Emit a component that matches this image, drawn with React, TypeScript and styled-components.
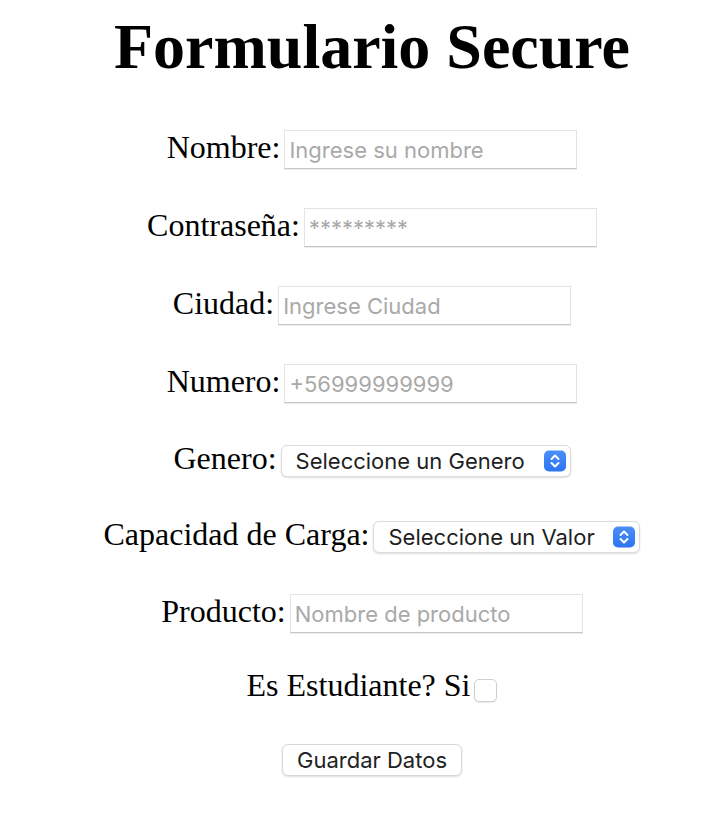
import React from "react";
import styled, { createGlobalStyle } from "styled-components";

const GlobalStyle = createGlobalStyle`
  html, body {
    margin: 0;
    padding: 0;
    background: #ffffff;
  }
  body {
    font-family: "Liberation Serif", "Times New Roman", serif;
    color: #000;
  }
`;

const Page = styled.main`
  display: flex;
  flex-direction: column;
  align-items: center;
  padding: 10px 0 40px 22px;
`;

const Title = styled.h1`
  margin: 0;
  font-family: "Liberation Serif", "Times New Roman", serif;
  font-weight: 700;
  font-size: 64px;
  line-height: normal;
  color: #000;
`;

const Form = styled.form`
  display: flex;
  flex-direction: column;
  align-items: center;
  margin-top: 45px;
`;

const Row = styled.div<{ $h: number }>`
  display: flex;
  justify-content: center;
  align-items: baseline;
  gap: 4px;
  height: ${(p) => p.$h}px;
`;

const Label = styled.label`
  font-family: "Liberation Serif", "Times New Roman", serif;
  font-size: 32px;
  line-height: normal;
  color: #000;
`;

const TextInput = styled.input`
  box-sizing: border-box;
  width: 293px;
  height: 39px;
  padding: 2px 4px 0;
  font-family: Inter, "Noto Sans", sans-serif;
  font-size: 22px;
  color: #222;
  background: #fff;
  border: 1px solid #e4e4e4;
  border-bottom-color: #c6c6c6;
  border-radius: 0;
  box-shadow: 0 1px 0 #ececec;
  outline: none;
  &::placeholder {
    color: #a9a9a9;
  }
`;

const SelectWrap = styled.span`
  position: relative;
  display: inline-flex;
`;

const Select = styled.select`
  appearance: none;
  -webkit-appearance: none;
  box-sizing: border-box;
  height: 32px;
  padding: 0 44px 0 14px;
  font-family: Inter, "Noto Sans", sans-serif;
  font-size: 22px;
  color: #1e1e1e;
  background: #fff;
  border: 1px solid #dcdcdc;
  border-radius: 6px;
  box-shadow: 0 1px 2px rgba(0, 0, 0, 0.14);
  outline: none;
`;

const Arrows = styled.span`
  position: absolute;
  right: 5px;
  top: 50%;
  transform: translateY(-50%);
  width: 22px;
  height: 21px;
  border-radius: 5px;
  background: linear-gradient(#4b8ff8, #2c74f2);
  display: flex;
  align-items: center;
  justify-content: center;
  pointer-events: none;
`;

const Check = styled.input`
  appearance: none;
  -webkit-appearance: none;
  box-sizing: border-box;
  align-self: flex-start;
  margin: 11.5px 0 0 0;
  width: 23px;
  height: 23px;
  background: #fff;
  border: 1px solid #cfcfcf;
  border-radius: 5px;
  box-shadow: 0 1px 1px rgba(0, 0, 0, 0.08);
`;

const SaveButton = styled.button`
  box-sizing: border-box;
  height: 32px;
  padding: 0 14px;
  font-family: Inter, "Noto Sans", sans-serif;
  font-size: 22px;
  color: #222;
  background: #fff;
  border: 1px solid #d8d8d8;
  border-radius: 6px;
  box-shadow: 0 1px 2px rgba(0, 0, 0, 0.14);
`;

const ArrowIcon = () => (
  <svg width="22" height="21" viewBox="0 0 22 21" fill="none">
    <path d="M7.5 8.5 L11 5 L14.5 8.5" stroke="#fff" strokeWidth="2" strokeLinecap="round" strokeLinejoin="round" />
    <path d="M7.5 12.5 L11 16 L14.5 12.5" stroke="#fff" strokeWidth="2" strokeLinecap="round" strokeLinejoin="round" />
  </svg>
);

const PickList = ({ id, first, options }: { id: string; first: string; options: string[] }) => (
  <SelectWrap>
    <Select id={id} defaultValue="">
      <option value="">{first}</option>
      {options.map((o) => (
        <option key={o} value={o}>
          {o}
        </option>
      ))}
    </Select>
    <Arrows>
      <ArrowIcon />
    </Arrows>
  </SelectWrap>
);

export default function App() {
  return (
    <>
      <GlobalStyle />
      <Page>
        <Title>Formulario Secure</Title>
        <Form onSubmit={(e) => e.preventDefault()}>
          <Row $h={78}>
            <Label htmlFor="nombre">Nombre:</Label>
            <TextInput id="nombre" type="text" placeholder="Ingrese su nombre" />
          </Row>
          <Row $h={78}>
            <Label htmlFor="pass">Contraseña:</Label>
            <TextInput id="pass" type="password" placeholder="*********" />
          </Row>
          <Row $h={78}>
            <Label htmlFor="ciudad">Ciudad:</Label>
            <TextInput id="ciudad" type="text" placeholder="Ingrese Ciudad" />
          </Row>
          <Row $h={77}>
            <Label htmlFor="numero">Numero:</Label>
            <TextInput id="numero" type="tel" placeholder="+56999999999" />
          </Row>
          <Row $h={76}>
            <Label htmlFor="genero">Genero:</Label>
            <PickList id="genero" first="Seleccione un Genero" options={["Masculino", "Femenino", "Otro"]} />
          </Row>
          <Row $h={77}>
            <Label htmlFor="carga">Capacidad de Carga:</Label>
            <PickList id="carga" first="Seleccione un Valor" options={["Baja", "Media", "Alta"]} />
          </Row>
          <Row $h={74}>
            <Label htmlFor="producto">Producto:</Label>
            <TextInput id="producto" type="text" placeholder="Nombre de producto" />
          </Row>
          <Row $h={76.5}>
            <Label htmlFor="estudiante">Es Estudiante? Si</Label>
            <Check id="estudiante" type="checkbox" />
          </Row>
          <Row $h={40}>
            <SaveButton type="submit">Guardar Datos</SaveButton>
          </Row>
        </Form>
      </Page>
    </>
  );
}
